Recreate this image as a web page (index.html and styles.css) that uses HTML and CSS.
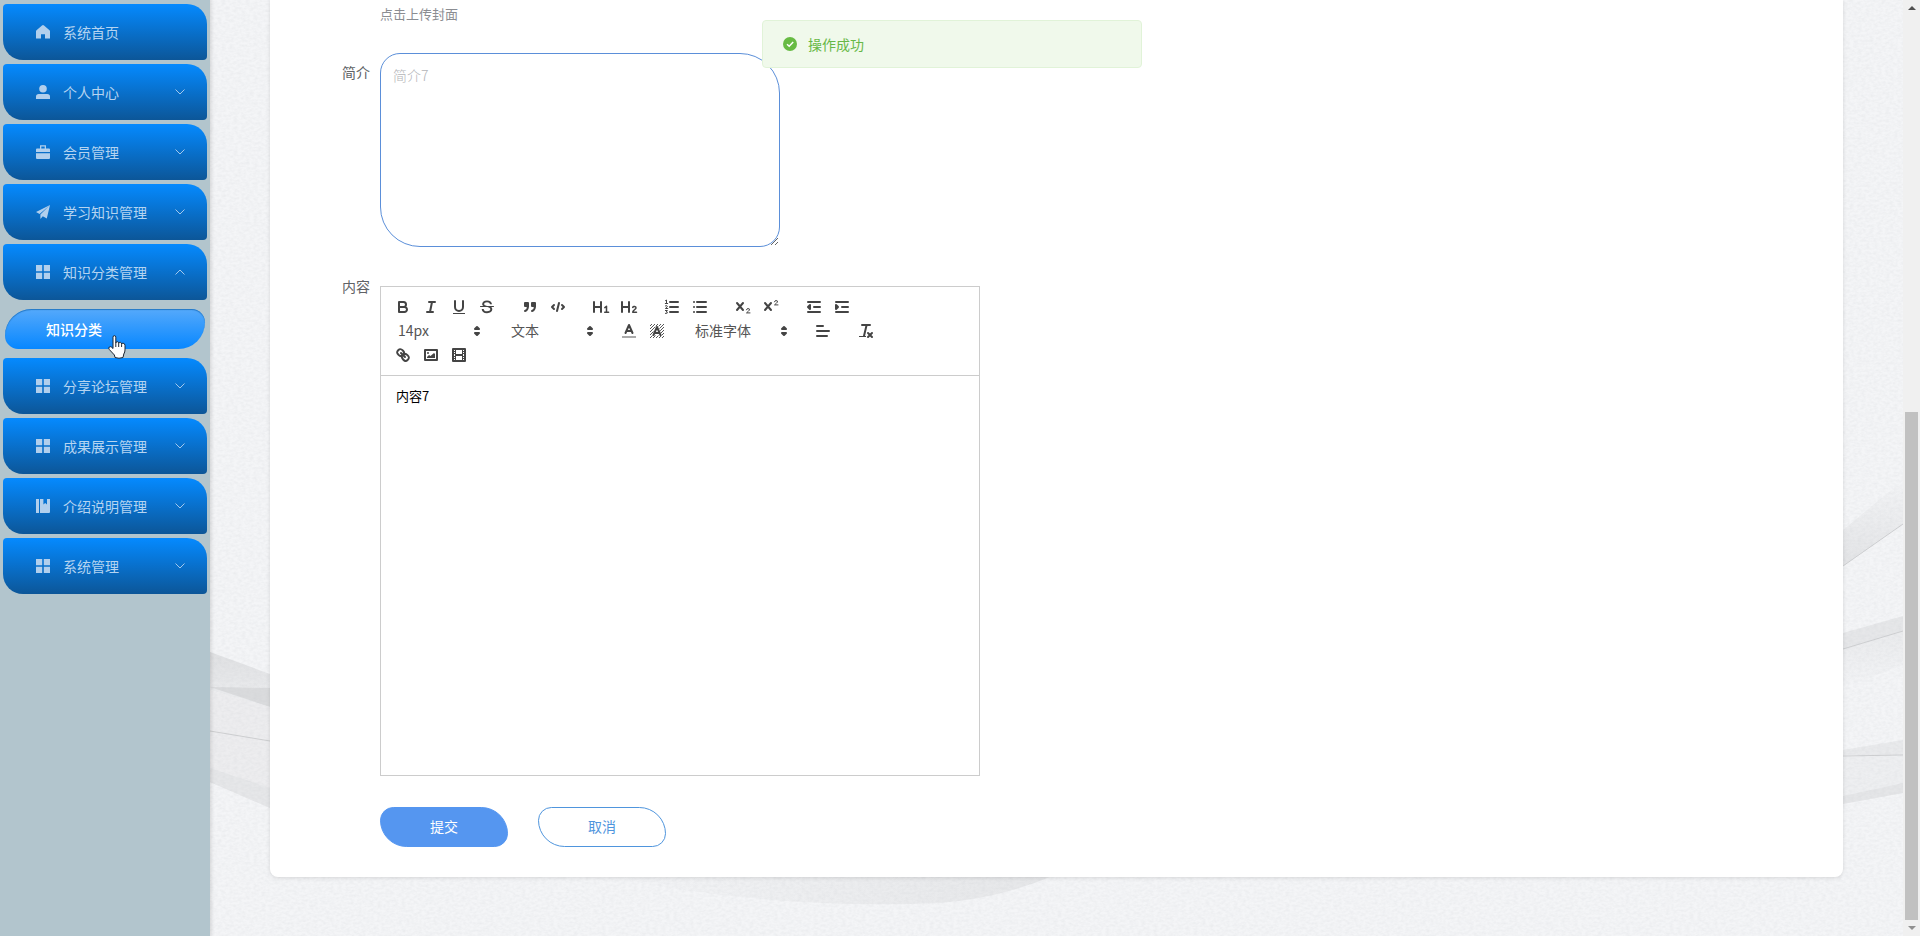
FILE: index.html
```html
<!DOCTYPE html>
<html lang="zh-CN">
<head>
<meta charset="utf-8">
<meta name="viewport" content="width=device-width, initial-scale=1">
<title>知识分类</title>
<link rel="stylesheet" href="styles.css">
</head>
<body>
<svg class="defs" aria-hidden="true">
  <symbol id="i-home" viewBox="0 0 14 14"><path d="M7 0Q7.500 0 8 .400L13.500 5.200Q14 5.700 14 6.300V13.600H9V9.200H5V13.600H0V6.300Q0 5.700.500 5.200L6 .400Q6.500 0 7 0z"/></symbol>
  <symbol id="i-user" viewBox="0 0 14 14"><circle cx="7" cy="3.8" r="3.8"/><path d="M0 14v-2.500Q0 9 2.800 9h8.400Q14 9 14 11.500V14z"/></symbol>
  <symbol id="i-case" viewBox="0 0 14 14"><path d="M0 7V4.500Q0 3.400 1 3.400h3V.200h6v3.200h3q1 0 1 1.100V7zM5.300 3.400h3.400V1.600H5.300zM0 8.200h14V13q0 1-1 1H1q-1 0-1-1z" fill-rule="evenodd"/></symbol>
  <symbol id="i-send" viewBox="0 0 14 14"><path d="M14 0 0 7l3.600 2zM14 0 4.400 9.500V14l2.400-2.700 4 2.300z"/></symbol>
  <symbol id="i-menu" viewBox="0 0 14 14"><path d="M0 0h6.200v6.200H0zM7.800 0H14v6.200H7.800zM0 7.800h6.200V14H0zM7.800 7.800H14V14H7.800z"/></symbol>
  <symbol id="i-note" viewBox="0 0 14 14"><path d="M0 0h3v14H0zM4 0h3.400v5.600l1.800-1.700L11 5.600V0h3v13q0 1-1 1H4z"/></symbol>
  <symbol id="i-down" viewBox="0 0 10 6"><path d="M.5.5 5 5 9.500.5"/></symbol>
  <symbol id="i-sort" viewBox="0 0 18 18"><path d="m7 11 2 2 2-2zM7 7l2-2 2 2z"/></symbol>
</svg>
<div class="app">
  <aside class="sidebar">
    <nav>
      <ul class="menu">
        <li><a class="item" href="#"><svg class="icon"><use href="#i-home"/></svg><span>系统首页</span></a></li>
        <li><a class="item" href="#"><svg class="icon"><use href="#i-user"/></svg><span>个人中心</span><svg class="arrow"><use href="#i-down"/></svg></a></li>
        <li><a class="item" href="#"><svg class="icon"><use href="#i-case"/></svg><span>会员管理</span><svg class="arrow"><use href="#i-down"/></svg></a></li>
        <li><a class="item" href="#"><svg class="icon"><use href="#i-send"/></svg><span>学习知识管理</span><svg class="arrow"><use href="#i-down"/></svg></a></li>
        <li>
          <a class="item" href="#"><svg class="icon"><use href="#i-menu"/></svg><span>知识分类管理</span><svg class="arrow arrow-up"><use href="#i-down"/></svg></a>
          <ul class="submenu">
            <li><a class="subitem" href="#">知识分类</a>
              <svg class="cursor" viewBox="0 0 18 24" aria-hidden="true"><path d="M5 2.200Q5 .700 6.400.700T7.800 2.200V8q.300-1.500 1.700-1.300 1.200.200 1.200 1.800.300-1.400 1.600-1.200 1.300.200 1.300 1.900.300-1.200 1.500-1 1.900.200 1.900 2.300V15q0 2-1.200 4l-.800 3.500Q11 24 7 22.500L6.400 20 1.300 14.500Q.200 13 1.300 12q1-.800 2.300.200L5 13.500z"/><path d="M7.800 8v4M10.700 8.500V12M13.600 9.200V12" fill="none"/></svg>
            </li>
          </ul>
        </li>
        <li><a class="item" href="#"><svg class="icon"><use href="#i-menu"/></svg><span>分享论坛管理</span><svg class="arrow"><use href="#i-down"/></svg></a></li>
        <li><a class="item" href="#"><svg class="icon"><use href="#i-menu"/></svg><span>成果展示管理</span><svg class="arrow"><use href="#i-down"/></svg></a></li>
        <li><a class="item" href="#"><svg class="icon"><use href="#i-note"/></svg><span>介绍说明管理</span><svg class="arrow"><use href="#i-down"/></svg></a></li>
        <li><a class="item" href="#"><svg class="icon"><use href="#i-menu"/></svg><span>系统管理</span><svg class="arrow"><use href="#i-down"/></svg></a></li>
      </ul>
    </nav>
  </aside>

  <main class="main">
    <svg class="backdrop" viewBox="0 0 1693 936" preserveAspectRatio="none" aria-hidden="true">
      <defs>
        <filter id="paper" x="0" y="0" width="100%" height="100%">
          <feTurbulence type="fractalNoise" baseFrequency="0.25 0.4" numOctaves="3" seed="4"/>
          <feColorMatrix values="0 0 0 0 .5  0 0 0 0 .52  0 0 0 0 .55  .28 0 0 0 -.09"/>
        </filter>
        <linearGradient id="fade" x1="0" y1="0" x2="0" y2="1"><stop offset="0" stop-color="#dfe0e2"/><stop offset="1" stop-color="#eeeff1"/></linearGradient>
        <linearGradient id="rise" x1="0" y1="0" x2="0" y2="1"><stop offset="0" stop-color="#f3f4f6"/><stop offset="1" stop-color="#e3e4e6"/></linearGradient>
        <linearGradient id="sink" x1="0" y1="0" x2="0" y2="1"><stop offset="0" stop-color="#eaebed"/><stop offset="1" stop-color="#f3f4f6"/></linearGradient>
        <linearGradient id="wave" x1="0" y1="0" x2="1" y2="0"><stop offset="0" stop-color="#f3f4f6"/><stop offset="1" stop-color="#e6e7e9"/></linearGradient>
      </defs>
      <path fill="url(#fade)" d="M0 652 60 674V708L0 690z"/>
      <path fill="#dadbdd" d="M0 687 60 688V707z"/>
      <path fill="#ededef" d="M0 690 60 707V808L0 782z"/>
      <path fill="#e6e7e9" d="M0 768 60 788V808L0 782z"/>
      <path class="crease" d="M0 731 60 741"/>
      <path fill="url(#rise)" d="M1633 530 1693 480V524L1633 566z"/>
      <path class="crease" d="M1633 566 1693 524"/>
      <path fill="#e6e7e9" d="M1633 633 1693 616V631L1633 649z"/>
      <path fill="url(#sink)" d="M1633 649 1693 631V665L1633 688z"/>
      <path class="crease" d="M1633 649 1693 631"/>
      <path fill="#e9eaec" d="M1633 750 1693 740V755H1633z"/>
      <path fill="#eeeff1" d="M1633 756H1693V793L1633 804z"/>
      <path class="crease" d="M1633 756 1693 755"/>
      <path fill="#e5e6e8" d="M1633 796 1693 783V793L1633 804z"/>
      <path fill="url(#wave)" d="M400 877H840Q790 898 730 903 560 910 400 877z"/>
      <rect width="1693" height="936" filter="url(#paper)"/>
    </svg>
    <form class="card">
      <div class="row">
        <span class="label"></span>
        <p class="hint">点击上传封面</p>
      </div>
      <div class="row row-intro">
        <label class="label label-intro" for="intro">简介</label>
        <textarea class="intro" id="intro" placeholder="简介7"></textarea>
      </div>
      <div class="row">
        <span class="label" id="content-label">内容</span>
        <div class="editor">
          <div class="toolbar">
            <span class="group">
              <button type="button" aria-label="bold"><svg viewBox="0 0 18 18"><path class="s" d="M5 4h4.500A2.500 2.500 0 0 1 12 6.500 2.500 2.500 0 0 1 9.500 9H5zM5 9h5.500a2.500 2.500 0 0 1 2.500 2.500 2.500 2.500 0 0 1-2.500 2.500H5z"/></svg></button>
              <button type="button" aria-label="italic"><svg viewBox="0 0 18 18"><path class="s" d="M7 4h6M5 14h6M8 14l2-10"/></svg></button>
              <button type="button" aria-label="underline"><svg viewBox="0 0 18 18"><path class="s" d="M5 3v6a4 4 0 0 0 8 0V3"/><rect class="f" x="3" y="15" width="12" height="1"/></svg></button>
              <button type="button" aria-label="strike"><svg viewBox="0 0 18 18"><path class="s t" d="M15.500 8.500h-13"/><path class="f" d="M9 8C7 7.500 6.200 7 6.200 6c0-1 1-1.800 2.800-1.800s2.800.800 3 2h2C13.800 4 12 2.500 9 2.500S4.200 4.200 4.200 6c0 1 .500 1.600 1.200 2zM9.500 9c2 .500 2.800 1.200 2.800 2.300 0 1.300-1.200 2-3.300 2-2.200 0-3.100-.800-3.300-2.300h-2c.200 2.500 1.800 4.200 5.300 4.200s5.300-1.600 5.300-3.900c0-1-.400-1.700-1-2.300z"/></svg></button>
            </span>
            <span class="group">
              <button type="button" aria-label="blockquote"><svg viewBox="0 0 18 18"><path class="fs" d="M4 5h3v3H4zM11 5h3v3h-3z"/><path class="s" d="M7 8c0 4.031-3 5-3 5M14 8c0 4.031-3 5-3 5"/></svg></button>
              <button type="button" aria-label="code"><svg viewBox="0 0 18 18"><path class="s" d="M5 7 3 9l2 2M13 7l2 2-2 2M10 5l-2 8"/></svg></button>
            </span>
            <span class="group">
              <button type="button" aria-label="heading 1"><svg viewBox="0 0 18 18"><path class="s" d="M2 4v10M9 4v10M2 9h7"/><path class="s v" d="M12.800 9.600 14.500 8.300V14M12.700 14.200h3.900"/></svg></button>
              <button type="button" aria-label="heading 2"><svg viewBox="0 0 18 18"><path class="s" d="M2 4v10M9 4v10M2 9h7"/><path class="s v" d="M12.700 9.400c.5-1.400 3.500-1.100 3.300.6-.1 1.200-2.900 2-3.300 4.200h3.800"/></svg></button>
            </span>
            <span class="group">
              <button type="button" aria-label="ordered list"><svg viewBox="0 0 18 18"><path class="s" d="M7 4h8M7 9h8M7 14h8"/><path class="s t" d="M2.500 2.600 3.500 2v3.500M2.300 5.500h2.400M2.400 7.900q2-.8 2 .4 0 .6-2 2.200h2.400M2.400 12.500h2l-1.200 1.500q1.500 0 1.200 1-.4.800-2 .400"/></svg></button>
              <button type="button" aria-label="bullet list"><svg viewBox="0 0 18 18"><path class="s" d="M6 4h9M6 9h9M6 14h9M3 4h.010M3 9h.010M3 14h.010"/></svg></button>
            </span>
            <span class="group">
              <button type="button" aria-label="subscript"><svg viewBox="0 0 18 18"><path class="s" d="m3 5 6 7M9 5l-6 7"/><path class="s t" d="M12.500 11.800q.3-1.300 1.600-1.300 2 .1 1.200 1.700-.4.700-2.800 2.700h3.500"/></svg></button>
              <button type="button" aria-label="superscript"><svg viewBox="0 0 18 18"><path class="s" d="m3 5 6 7M9 5l-6 7"/><path class="s t" d="M12.500 3.800q.3-1.300 1.600-1.300 2 .1 1.200 1.700-.4.700-2.800 2.700h3.500"/></svg></button>
            </span>
            <span class="group">
              <button type="button" aria-label="outdent"><svg viewBox="0 0 18 18"><path class="s" d="M3 14h12M3 4h12M9 9h6"/><path class="fs" d="M5 7v4L3 9z"/></svg></button>
              <button type="button" aria-label="indent"><svg viewBox="0 0 18 18"><path class="s" d="M3 14h12M3 4h12M9 9h6"/><path class="fs" d="M3 7v4l2-2z"/></svg></button>
            </span>
            <span class="group picker">
              <select aria-label="字号"><option>14px</option></select><svg><use href="#i-sort"/></svg>
            </span>
            <span class="group picker">
              <select aria-label="标题"><option>文本</option></select><svg><use href="#i-sort"/></svg>
            </span>
            <span class="group">
              <button type="button" aria-label="color"><svg viewBox="0 0 18 18"><path class="s light" d="M2 15h14"/><path class="s" d="M5.500 11 9 3l3.500 8M6.400 9h5.200"/></svg></button>
              <button type="button" aria-label="background"><svg viewBox="0 0 18 18"><defs><pattern id="hatch" width="3" height="3" patternUnits="userSpaceOnUse"><path d="M-1 1 1-1M0 3 3 0M2 4 4 2" stroke="#444" stroke-width=".9"/></pattern></defs><path fill="url(#hatch)" d="M2 2h14v14H2z"/><path fill="#fff" d="M7.500 4h3L14 13.500H4z"/><path class="s" d="M5.500 13 9 5l3.500 8M6.400 11h5.200"/></svg></button>
            </span>
            <span class="group picker picker-wide">
              <select aria-label="字体"><option>标准字体</option></select><svg><use href="#i-sort"/></svg>
            </span>
            <span class="group">
              <button type="button" aria-label="align"><svg viewBox="0 0 18 18"><path class="s" d="M3 9h12M3 14h10M3 4h6"/></svg></button>
            </span>
            <span class="group">
              <button type="button" aria-label="clean"><svg viewBox="0 0 18 18"><path class="s" d="M5 3h8M9.600 3 7 14M11 11l4 4M15 11l-4 4"/><rect class="f" x="2" y="14" width="7" height="1"/></svg></button>
            </span>
            <span class="group">
              <button type="button" aria-label="link"><svg viewBox="0 0 18 18"><path class="s" d="m7 7 4 4"/><path class="s" d="M8.900 4.577a3.476 3.476 0 0 1 .360 4.679A3.476 3.476 0 0 1 4.577 8.900C3.185 7.500 2.035 6.400 4.217 4.217S7.500 3.185 8.900 4.577zM13.423 9.100a3.476 3.476 0 0 0-4.679-.360 3.476 3.476 0 0 0 .360 4.679c1.392 1.392 2.500 2.542 4.679.360s1.031-3.287-.360-4.679z"/></svg></button>
              <button type="button" aria-label="image"><svg viewBox="0 0 18 18"><rect class="s" x="3" y="4" width="12" height="10"/><circle class="f" cx="6" cy="7" r="1"/><path class="f" d="M5 12v-1l2-2 1.500 1L12 7l1 1v4z"/></svg></button>
              <button type="button" aria-label="video"><svg viewBox="0 0 18 18"><rect class="s" x="3" y="3" width="12" height="12"/><path class="f" d="M5 3h1v12H5zM12 3h1v12h-1zM5 8h8v2H5zM3 5h3v1H3zM3 7h3v1H3zM3 10h3v1H3zM3 12h3v1H3zM12 5h3v1h-3zM12 7h3v1h-3zM12 10h3v1h-3zM12 12h3v1h-3z"/></svg></button>
            </span>
          </div>
          <div class="editor-body" contenteditable="true" spellcheck="false" role="textbox" aria-labelledby="content-label">内容7</div>
        </div>
      </div>
      <div class="actions">
        <button class="btn btn-primary" type="button">提交</button>
        <button class="btn btn-plain" type="button">取消</button>
      </div>
    </form>
  </main>

  <div class="scroll" aria-hidden="true">
    <span class="tri tri-up"></span>
    <span class="thumb"></span>
    <span class="tri tri-down"></span>
  </div>
</div>
<div class="message" role="alert">
  <svg class="message-icon" viewBox="0 0 14 14"><circle cx="7" cy="7" r="7"/><path d="m4 7.200 2.200 2.100L10.200 5"/></svg>
  <span>操作成功</span>
</div>
</body>
</html>
```

FILE: styles.css
```css
* { box-sizing: border-box; }

body {
  margin: 0;
  font-family: "Noto Sans CJK SC", sans-serif;
  font-size: 14px;
  color: #606266;
}

ul { margin: 0; padding: 0; list-style: none; }
button, select, textarea { font: inherit; }
a { text-decoration: none; }
.defs { position: absolute; width: 0; height: 0; }

.app { display: flex; min-height: 100vh; background: #f4f5f7; }

/* Sidebar */
.sidebar {
  flex: 0 0 210px;
  padding: 4px 3px;
  background: #b2c5cd;
  box-shadow: 1px 0 4px rgba(0, 0, 0, .15);
  z-index: 1;
}
.menu { display: flex; flex-direction: column; gap: 4px; }
.item {
  display: flex;
  align-items: center;
  height: 56px;
  padding: 0 22px 0 33px;
  border-radius: 4px 20px 4px 20px;
  background: linear-gradient(#058aff, #0c5698);
  color: #b5d4f1;
}
.icon { width: 14px; height: 14px; margin-right: 13px; fill: #b1cfed; }
.arrow { width: 10px; height: 6px; margin-left: auto; fill: none; stroke: #a3c8ec; }
.arrow-up { transform: rotate(180deg); }
.submenu { padding: 9px 2px 5px; }
.submenu li { position: relative; }
.subitem {
  display: flex;
  align-items: center;
  height: 40px;
  padding: 0 41px;
  border-radius: 40px 20px 40px 20px;
  background: linear-gradient(#55a9fb, #0787ff);
  box-shadow: inset 0 1px 1px #2377c4;
  color: #fff;
  font-weight: 500;
}
.cursor {
  position: absolute;
  top: 26px;
  left: 103px;
  width: 18px;
  height: 24px;
  fill: #fff;
  stroke: #1d2733;
}

/* Main area */
.main { position: relative; flex: 1; min-width: 0; padding: 0 60px 59px; }
.backdrop { position: absolute; inset: 0; width: 100%; height: 100%; }
.crease { fill: none; stroke: #cdced0; stroke-width: 1; }
.card {
  position: relative;
  padding: 0 30px 30px;
  border-radius: 0 0 8px 8px;
  background: #fff;
  box-shadow: 0 1px 4px rgba(0, 0, 0, .12);
}
.row { display: flex; align-items: flex-start; }
.row-intro { padding: 25px 0 32px; }
.label { flex: 0 0 80px; padding-right: 10px; text-align: right; line-height: 1; }
.label-intro { padding-top: 12px; }
.hint { margin: 0; font-size: 13px; line-height: 28px; color: #8b8d92; }
.intro {
  width: 400px;
  height: 194px;
  padding: 11px 12px;
  border: 1px solid #5b8fd9;
  border-radius: 20px 40px 20px 40px;
  outline: 0;
  background: #fff;
  line-height: 21px;
  color: #606266;
  resize: both;
}
.intro::placeholder { color: #b4b5b8; font-weight: 300; }

/* Rich text editor */
.editor { width: 600px; margin-top: 7px; border: 1px solid #ccc; }
.toolbar {
  display: flex;
  flex-wrap: wrap;
  padding: 8px;
  border-bottom: 1px solid #ccc;
}
.group { display: flex; margin-right: 15px; }
.group button {
  width: 28px;
  height: 24px;
  padding: 3px 5px;
  border: 0;
  background: none;
}
.group svg { display: block; width: 18px; height: 18px; }
.s { fill: none; stroke: #444; stroke-width: 2; stroke-linecap: round; stroke-linejoin: round; }
.f { fill: #444; }
.fs { fill: #444; stroke: #444; stroke-width: 2; stroke-linejoin: round; }
.t { stroke-width: 1; }
.v { stroke-width: 1.5; }
.light { stroke: #aaa; stroke-linecap: butt; }
.picker { position: relative; width: 98px; height: 24px; }
.picker-wide { width: 108px; }
.picker select {
  width: 100%;
  height: 22px;
  padding: 0 20px 0 9px;
  border: 0;
  background: none;
  appearance: none;
  color: #555;
}
.picker svg {
  position: absolute;
  top: 3px;
  right: 1px;
  fill: #444;
  stroke: none;
  pointer-events: none;
}
.picker use { stroke: #444; stroke-width: 2; stroke-linejoin: round; }
.editor-body {
  min-height: 399px;
  padding: 11px 15px;
  font-size: 13px;
  line-height: 18px;
  color: #000;
  outline: 0;
}

/* Form buttons */
.actions { display: flex; gap: 30px; padding: 31px 0 0 80px; }
.btn {
  width: 128px;
  height: 40px;
  padding: 0 0 2px;
  border: 1px solid #5596f0;
  border-radius: 20px 40px 20px 40px;
}
.btn-primary { background: #5596f0; color: #fff; }
.btn-plain { background: #fff; border-color: #4f95dd; color: #4f95dd; }

/* Window scrollbar */
.scroll {
  display: flex;
  flex: 0 0 17px;
  flex-direction: column;
  align-items: center;
  padding: 6px 0;
  background: #f0f0f0;
}
.thumb { flex: 0 0 55%; width: 13px; margin: auto 0 6px; background: #c1c1c1; }
.tri { border: 4px solid transparent; }
.tri-up { border-top: 0; border-bottom-color: #505050; }
.tri-down { border-bottom: 0; border-top-color: #909090; }

/* Toast */
.message {
  position: fixed;
  top: 20px;
  left: 50%;
  z-index: 5;
  display: flex;
  align-items: center;
  width: 380px;
  height: 48px;
  margin-left: -198px;
  padding: 0 20px 1px;
  border: 1px solid #e1f3d8;
  border-radius: 4px;
  background: #f0f9eb;
  color: #67b846;
}
.message-icon { width: 14px; height: 14px; margin-right: 11px; fill: #67bb43; }
.message-icon path { fill: none; stroke: #fff; stroke-width: 1.5; }
```
